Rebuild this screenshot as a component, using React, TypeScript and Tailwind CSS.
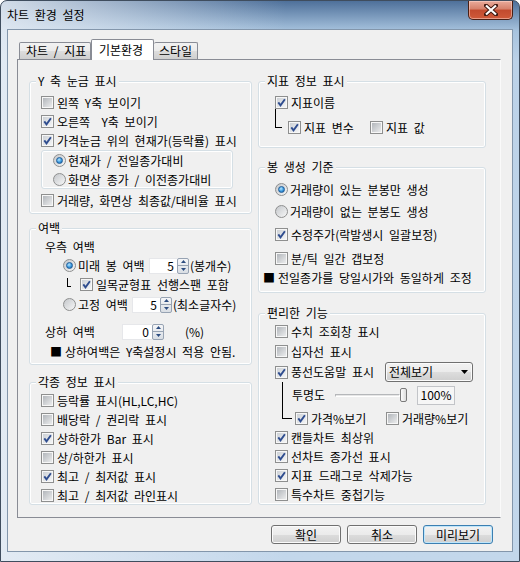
import React from 'react';

const CheckBox: React.FC<{ checked?: boolean }> = ({ checked = false }) => (
  <span className="flex h-[13px] w-[13px] shrink-0 border border-[#8e8f8f] bg-[#f7f7f7] p-px">
    <span
      className={`flex flex-1 items-center justify-center ${
        checked ? 'bg-[linear-gradient(135deg,#cdd1d6,#f4f5f6)]' : 'bg-[linear-gradient(135deg,#b2b6bb,#ebeced)]'
      }`}
    >
      {checked && (
        <svg width="9" height="9" viewBox="0 0 9 9">
          <path d="M1.3 4.4 L3.5 7.3 L7.9 1.2" fill="none" stroke="#2f4d8f" strokeWidth="1.9" />
        </svg>
      )}
    </span>
  </span>
);

const Radio: React.FC<{ checked?: boolean }> = ({ checked = false }) => (
  <span className="flex h-[13px] w-[13px] shrink-0 items-center justify-center rounded-full border border-[#8e8f8f] bg-[linear-gradient(135deg,#c4c7cb,#f7f7f7)]">
    {checked && (
      <span className="h-[7px] w-[7px] rounded-full border border-[#1f5c98] bg-[radial-gradient(circle_at_40%_35%,#b4e6ff,#3a98de_55%,#175a9c)]" />
    )}
  </span>
);

interface RowProps {
  checked?: boolean;
  className?: string;
  children: React.ReactNode;
}

const Check: React.FC<RowProps> = ({ checked, className = '', children }) => (
  <div className={`flex h-[19px] items-center ${className}`}>
    <CheckBox checked={checked} />
    <span className="ml-[3px] whitespace-pre">{children}</span>
  </div>
);

const RadioRow: React.FC<RowProps> = ({ checked, className = '', children }) => (
  <div className={`flex h-[19px] items-center ${className}`}>
    <Radio checked={checked} />
    <span className="ml-[2px] whitespace-pre">{children}</span>
  </div>
);

// win7 style group box, caption sits on the top border
const GroupBox: React.FC<{ title: string; className?: string; inner?: string; children: React.ReactNode }> = ({
  title,
  className = '',
  inner = '',
  children,
}) => (
  <div className={`rounded-[3px] border border-[#d5dfe5] shadow-[inset_0_0_0_1px_#ffffff] ${className}`}>
    <div className="-mt-[8px] ml-[6px] w-fit bg-[#f0f0f0] px-[2px] leading-[14px]">{title}</div>
    <div className={inner}>{children}</div>
  </div>
);

const SpinBox: React.FC<{ value: string; className?: string }> = ({ value, className = '' }) => (
  <div className={`flex h-[16px] ${className}`}>
    <div className="flex flex-1 items-center justify-end border border-r-0 border-[#e6e7ea] bg-white pr-[3px] leading-none">
      {value}
    </div>
    <div className="flex w-[12px] flex-col rounded-[2px] border border-[#97a3b3] bg-[linear-gradient(#f5f6f8,#d9dee4)]">
      <div className="flex flex-1 items-center justify-center border-b border-[#97a3b3]">
        <svg width="5" height="3" viewBox="0 0 5 3">
          <path d="M0 3 L2.5 0 L5 3z" fill="#2c4c80" />
        </svg>
      </div>
      <div className="flex flex-1 items-center justify-center">
        <svg width="5" height="3" viewBox="0 0 5 3">
          <path d="M0 0 L5 0 L2.5 3z" fill="#2c4c80" />
        </svg>
      </div>
    </div>
  </div>
);

const Button: React.FC<{ children: React.ReactNode; primary?: boolean }> = ({ children, primary = false }) => (
  <button
    type="button"
    className={`flex h-[19px] w-[70px] items-center justify-center rounded-[3px] border bg-[linear-gradient(#f2f2f2,#ebebeb_50%,#dddddd_50%,#cfcfcf)] leading-none ${
      primary ? 'border-[#3c7fb1] shadow-[inset_0_0_0_1px_#bfe6fb]' : 'border-[#707070] shadow-[inset_0_0_0_1px_#fbfbfb]'
    }`}
  >
    {children}
  </button>
);

export default function App() {
  return (
    <div className="h-[562px] w-[520px] overflow-hidden rounded-t-[7px] border border-[#3f4d5e] bg-[linear-gradient(to_right,rgba(232,238,245,0.85),rgba(232,238,245,0)_55%),linear-gradient(to_bottom,#4e709a,#a7c3de_30px,#bcd2e8_60px,#c3d7eb)] font-['Noto_Sans_CJK_KR','Noto_Sans',sans-serif] text-[12px] text-black [word-spacing:3px]">
      {/* title bar */}
      <div className="flex h-[28px] items-start justify-between">
        <div className="pl-[6px] pt-[7px] leading-[14px]">차트 환경 설정</div>
        <div className="mr-[6px] flex h-[19px] w-[45px] items-center justify-center rounded-b-[5px] border border-t-0 border-[#4a1f14] bg-[linear-gradient(#e9ab9b,#d5806a_45%,#c24a2e_50%,#cf5a3a)] shadow-[inset_0_0_0_1px_rgba(255,220,210,0.5)]">
          <svg width="14" height="12" viewBox="0 0 14 12">
            <path d="M2 1.5 L12 10.5 M12 1.5 L2 10.5" stroke="#40180f" strokeWidth="4" strokeLinecap="square" />
            <path d="M2 1.5 L12 10.5 M12 1.5 L2 10.5" stroke="#ffffff" strokeWidth="2.2" />
          </svg>
        </div>
      </div>

      {/* client area */}
      <div className="mx-[6px] flex h-[523px] flex-col border border-[#8396ab] bg-[#f0f0f0]">
        {/* tabs */}
        <div className="ml-[11px] mt-[9px] flex h-[20px] items-end">
          <div className="flex h-[17px] w-[72px] items-center rounded-t-[2px] border border-b-0 border-[#898c95] bg-[linear-gradient(#f2f2f2,#ebebeb_50%,#dddddd_50%,#cfcfcf)] pl-[6px] leading-none">
            차트 / 지표
          </div>
          <div className="relative z-10 -mb-px flex h-[21px] w-[63px] items-start rounded-t-[2px] border border-b-0 border-[#898c95] bg-white pl-[7px] pt-[3px] leading-[14px]">
            기본환경
          </div>
          <div className="flex h-[17px] w-[44px] items-center rounded-t-[2px] border border-b-0 border-l-0 border-[#898c95] bg-[linear-gradient(#f2f2f2,#ebebeb_50%,#dddddd_50%,#cfcfcf)] pl-[5px] leading-none">
            스타일
          </div>
        </div>

        {/* tab page */}
        <div className="ml-[9px] flex h-[459px] w-[484px] gap-[6px] border border-[#898c95] border-r-[#fafafa] pl-[11px]">
          {/* left column */}
          <div className="flex w-[223px] flex-col">
            <GroupBox title="Y 축 눈금 표시" className="mt-[21px] h-[133px]" inner="pl-[11px]">
              <Check className="mt-[5px]">왼쪽 Y축 보이기</Check>
              <Check checked>오른쪽  Y축 보이기</Check>
              <Check checked>가격눈금 위의 현재가(등락률) 표시</Check>
              <div className="h-[39px] w-[192px] rounded-[3px] border border-[#d5dfe5] pl-[11px] shadow-[inset_0_0_0_1px_#ffffff]">
                <RadioRow checked className="h-[18px]">
                  현재가 / 전일종가대비
                </RadioRow>
                <RadioRow className="h-[18px]">화면상 종가 / 이전종가대비</RadioRow>
              </div>
              <Check className="mt-[2px]">거래량, 화면상 최종값/대비율 표시</Check>
            </GroupBox>

            <GroupBox title="여백" className="mt-[14px] h-[137px]">
              <div className="mt-[2px] flex h-[19px] items-center pl-[15px]">우측 여백</div>
              <div className="flex h-[19px] items-center pl-[33px]">
                <Radio checked />
                <span className="ml-[2px] w-[71px] whitespace-nowrap">미래 봉 여백</span>
                <SpinBox value="5" className="w-[40px]" />
                <span className="ml-[1px] whitespace-nowrap">(봉개수)</span>
              </div>
              <div className="flex h-[19px] items-center pl-[37px]">
                <div className="mb-[5px] h-[9px] w-[4px] shrink-0 border-b border-l border-black" />
                <div className="ml-[9px] flex items-center">
                  <CheckBox checked />
                  <span className="ml-[3px] whitespace-nowrap">일목균형표 선행스팬 포함</span>
                </div>
              </div>
              <div className="mt-[1px] flex h-[19px] items-center pl-[33px]">
                <Radio />
                <span className="ml-[2px] w-[54px] whitespace-nowrap">고정 여백</span>
                <SpinBox value="5" className="w-[40px]" />
                <span className="ml-[1px] whitespace-nowrap">(최소글자수)</span>
              </div>
              <div className="mt-[8px] flex h-[19px] items-center pl-[15px]">
                <span className="w-[77px] whitespace-nowrap">상하 여백</span>
                <SpinBox value="0" className="w-[42px]" />
                <span className="ml-[21px]">(%)</span>
              </div>
              <div className="mt-[1px] flex h-[19px] items-center whitespace-nowrap pl-[20px]">
                <span className="mr-[3px]">■</span>상하여백은 Y축설정시 적용 안됨.
              </div>
            </GroupBox>

            <GroupBox title="각종 정보 표시" className="mt-[17px] h-[123px]" inner="pl-[11px]">
              <Check className="mt-[2px]">등락률 표시(HL,LC,HC)</Check>
              <Check>배당락 / 권리락 표시</Check>
              <Check checked>상하한가 Bar 표시</Check>
              <Check>상/하한가 표시</Check>
              <Check checked>최고 / 최저값 표시</Check>
              <Check>최고 / 최저값 라인표시</Check>
            </GroupBox>
          </div>

          {/* right column */}
          <div className="flex w-[228px] flex-col">
            <GroupBox title="지표 정보 표시" className="mt-[21px] h-[67px]" inner="pl-[16px]">
              <Check checked className="mt-[5px]">
                지표이름
              </Check>
              <div className="flex h-[25px]">
                <div className="-mt-[3px] h-[19px] w-[7px] shrink-0 border-b border-l border-black" />
                <Check checked className="ml-[6px] w-[82px] self-end">
                  지표 변수
                </Check>
                <Check className="self-end">지표 값</Check>
              </div>
            </GroupBox>

            <GroupBox title="봉 생성 기준" className="mt-[19px] h-[126px]">
              <RadioRow checked className="mt-[6px] pl-[16px]">
                거래량이 있는 분봉만 생성
              </RadioRow>
              <RadioRow className="mt-[3px] pl-[16px]">거래량이 없는 분봉도 생성</RadioRow>
              <Check checked className="mt-[4px] pl-[16px]">
                수정주가(락발생시 일괄보정)
              </Check>
              <Check className="mt-[5px] pl-[16px]">분/틱 일간 갭보정</Check>
              <div className="flex h-[19px] items-center whitespace-nowrap pl-[4px]">
                <span className="mr-[3px]">■</span>전일종가를 당일시가와 동일하게 조정
              </div>
            </GroupBox>

            <GroupBox title="편리한 기능" className="mt-[20px] h-[192px]" inner="pl-[16px]">
              <Check className="mt-[2px]">수치 조회창 표시</Check>
              <Check className="mt-[1px]">십자선 표시</Check>
              <div className="mt-[1px] flex h-[20px] items-center">
                <Check checked className="w-[110px]">
                  풍선도움말 표시
                </Check>
                <div className="flex h-[20px] w-[88px] items-center justify-between rounded-[3px] border border-[#707070] bg-[linear-gradient(#f2f2f2,#ebebeb_50%,#dddddd_50%,#cfcfcf)] pl-[3px] pr-[4px] shadow-[inset_0_0_0_1px_#fbfbfb]">
                  <span className="leading-none">전체보기</span>
                  <svg width="7" height="4" viewBox="0 0 7 4">
                    <path d="M0 0 L7 0 L3.5 4z" fill="#000000" />
                  </svg>
                </div>
              </div>
              <div className="flex pl-[7px]">
                <div className="h-[37px] w-[10px] shrink-0 border-b border-l border-black" />
                <div className="flex flex-col">
                  <div className="mt-[3px] flex h-[20px] items-center">
                    <span className="w-[43px] whitespace-nowrap">투명도</span>
                    <div className="flex h-[14px] w-[72px] items-center">
                      <div className="h-[3px] flex-1 border border-[#b5b7ba] border-b-white border-r-white bg-[#e6e6e6]" />
                      <div className="h-[14px] w-[7px] rounded-[2px] border border-[#7a7a7a] bg-[linear-gradient(to_right,#fdfdfd,#dcdcdc)]" />
                    </div>
                    <div className="ml-[10px] flex h-[19px] w-[38px] items-center justify-center border border-[#c2c4c8] bg-[#f6f6f6] leading-none">
                      100%
                    </div>
                  </div>
                  <div className="mt-[4px] flex">
                    <Check checked className="ml-[3px] w-[91px]">
                      가격%보기
                    </Check>
                    <Check>거래량%보기</Check>
                  </div>
                </div>
              </div>
              <Check checked className="h-[18px]">
                캔들차트 최상위
              </Check>
              <Check checked className="h-[18px]">
                선차트 종가선 표시
              </Check>
              <Check checked className="h-[18px]">
                지표 드래그로 삭제가능
              </Check>
              <Check className="h-[18px]">특수차트 중첩기능</Check>
            </GroupBox>
          </div>
        </div>

        {/* buttons */}
        <div className="mt-[7px] flex justify-end gap-[6px] pr-[19px]">
          <Button>확인</Button>
          <Button>취소</Button>
          <Button primary>미리보기</Button>
        </div>
      </div>
    </div>
  );
}
